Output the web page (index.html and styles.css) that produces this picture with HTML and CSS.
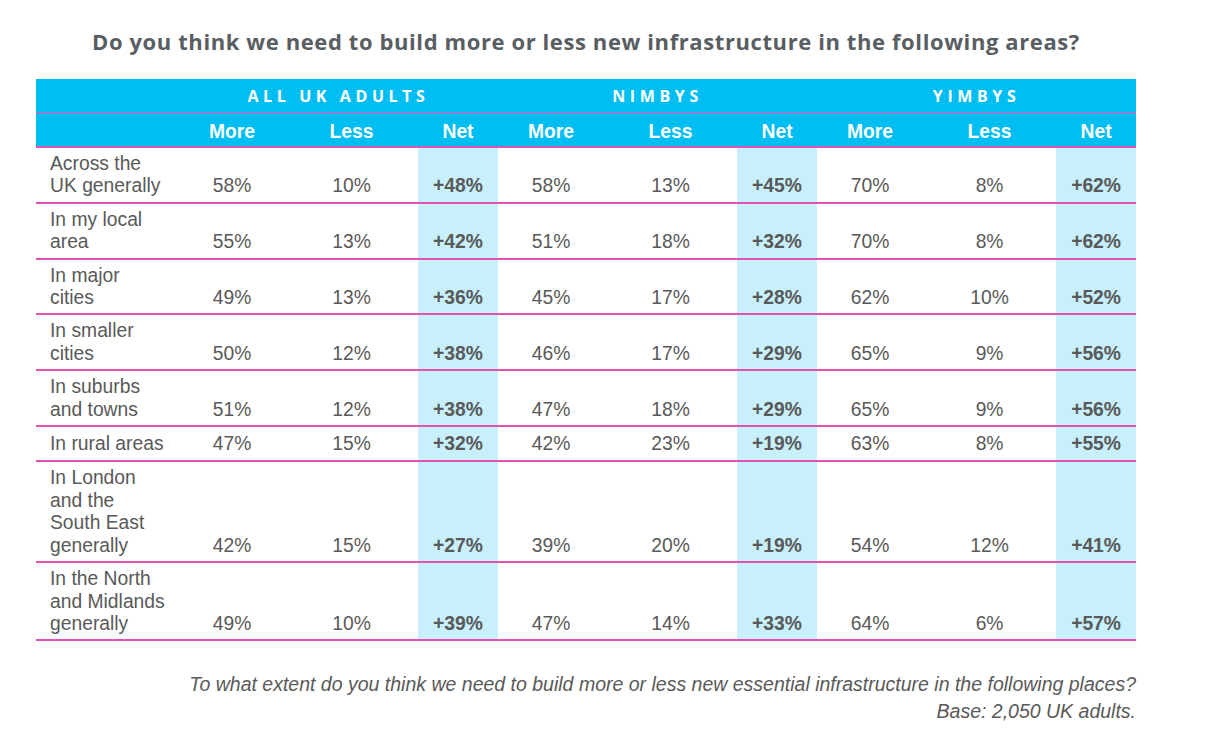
FILE: index.html
```html
<!DOCTYPE html>
<html lang="en">
<head>
<meta charset="utf-8">
<title>Infrastructure survey</title>
<link rel="stylesheet" href="styles.css">
</head>
<body>
<div class="page">
  <h1 class="title">Do you think we need to build more or less new infrastructure in the following areas?</h1>
  <table class="grid">
    <colgroup>
      <col class="c-label">
      <col class="c-more"><col class="c-less"><col class="c-net">
      <col class="c-more"><col class="c-less"><col class="c-net">
      <col class="c-more"><col class="c-less"><col class="c-net">
    </colgroup>
    <thead>
      <tr class="group-row">
        <th></th>
        <th colspan="3">ALL UK ADULTS</th>
        <th colspan="3">NIMBYS</th>
        <th colspan="3">YIMBYS</th>
      </tr>
      <tr class="sub-row">
        <th></th>
        <th>More</th><th>Less</th><th>Net</th>
        <th>More</th><th>Less</th><th>Net</th>
        <th>More</th><th>Less</th><th>Net</th>
      </tr>
    </thead>
    <tbody>
      <tr>
        <td class="label">Across the<br>UK generally</td>
        <td>58%</td><td>10%</td><td class="net">+48%</td>
        <td>58%</td><td>13%</td><td class="net">+45%</td>
        <td>70%</td><td>8%</td><td class="net">+62%</td>
      </tr>
      <tr>
        <td class="label">In my local<br>area</td>
        <td>55%</td><td>13%</td><td class="net">+42%</td>
        <td>51%</td><td>18%</td><td class="net">+32%</td>
        <td>70%</td><td>8%</td><td class="net">+62%</td>
      </tr>
      <tr>
        <td class="label">In major<br>cities</td>
        <td>49%</td><td>13%</td><td class="net">+36%</td>
        <td>45%</td><td>17%</td><td class="net">+28%</td>
        <td>62%</td><td>10%</td><td class="net">+52%</td>
      </tr>
      <tr>
        <td class="label">In smaller<br>cities</td>
        <td>50%</td><td>12%</td><td class="net">+38%</td>
        <td>46%</td><td>17%</td><td class="net">+29%</td>
        <td>65%</td><td>9%</td><td class="net">+56%</td>
      </tr>
      <tr>
        <td class="label">In suburbs<br>and towns</td>
        <td>51%</td><td>12%</td><td class="net">+38%</td>
        <td>47%</td><td>18%</td><td class="net">+29%</td>
        <td>65%</td><td>9%</td><td class="net">+56%</td>
      </tr>
      <tr class="single">
        <td class="label">In rural areas</td>
        <td>47%</td><td>15%</td><td class="net">+32%</td>
        <td>42%</td><td>23%</td><td class="net">+19%</td>
        <td>63%</td><td>8%</td><td class="net">+55%</td>
      </tr>
      <tr>
        <td class="label">In London<br>and the<br>South East<br>generally</td>
        <td>42%</td><td>15%</td><td class="net">+27%</td>
        <td>39%</td><td>20%</td><td class="net">+19%</td>
        <td>54%</td><td>12%</td><td class="net">+41%</td>
      </tr>
      <tr>
        <td class="label">In the North<br>and Midlands<br>generally</td>
        <td>49%</td><td>10%</td><td class="net">+39%</td>
        <td>47%</td><td>14%</td><td class="net">+33%</td>
        <td>64%</td><td>6%</td><td class="net">+57%</td>
      </tr>
    </tbody>
  </table>
  <p class="note">To what extent do you think we need to build more or less new essential infrastructure in the following places?<br>Base: 2,050 UK adults.</p>
</div>
</body>
</html>
```

FILE: styles.css
```css
html, body {
  margin: 0;
  padding: 0;
  background: #ffffff;
}

.page {
  width: 1100px;
  margin-left: 36px;
  padding-top: 27px;
  font-family: "Liberation Sans", Arial, sans-serif;
  color: #595959;
}

.title {
  margin: 0 0 24px 0;
  text-align: center;
  font-family: "Open Sans", "DejaVu Sans", sans-serif;
  font-weight: 700;
  font-size: 22px;
  letter-spacing: 0.6px;
  line-height: 28px;
  color: #595e62;
  white-space: nowrap;
}

.grid {
  width: 1100px;
  table-layout: fixed;
  border-collapse: collapse;
  border-spacing: 0;
  font-size: 19.3px;
  line-height: 22.4px;
}

.c-label { width: 143px; }
.c-more { width: 106px; }
.c-less { width: 133px; }
.c-net { width: 80px; }

.grid th {
  background: #00bdf2;
  color: #ffffff;
  padding: 0;
  text-align: center;
}

.group-row th {
  height: 32px;
  padding-top: 1px;
  font-family: "Open Sans", "DejaVu Sans", sans-serif;
  font-weight: 700;
  font-size: 16px;
  letter-spacing: 4.6px;
  border-bottom: 2px solid #8b82d6;
}

.sub-row th {
  height: 28px;
  padding-top: 4px;
  font-weight: 700;
  border-bottom: 2px solid #e252b4;
}

.grid td {
  padding: 5px 0 4px 0;
  text-align: center;
  vertical-align: bottom;
  border-bottom: 2px solid #e252b4;
}

.single td {
  padding-top: 6px;
  padding-bottom: 5px;
}

.grid td.label {
  text-align: left;
  padding-left: 14px;
  white-space: nowrap;
}

.grid td.net {
  background: #c8f0fc;
  font-weight: 700;
}

.note {
  margin: 30px 0 0 0;
  text-align: right;
  font-style: italic;
  font-size: 19.5px;
  line-height: 27px;
  color: #595959;
}
```
